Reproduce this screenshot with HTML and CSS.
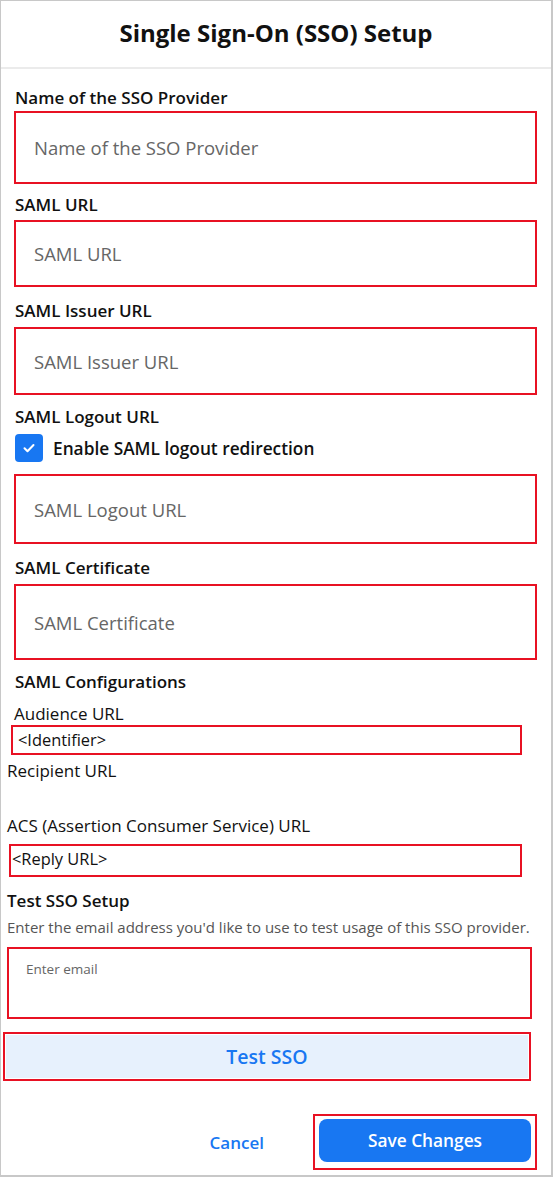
FILE: index.html
```html
<!DOCTYPE html>
<html lang="en">
<head>
  <meta charset="UTF-8" />
  <meta name="viewport" content="width=device-width, initial-scale=1.0" />
  <title>Single Sign-On (SSO) Setup</title>
  <link rel="stylesheet" href="styles.css">
</head>
<body>
  <div class="panel">
    <div class="panel-header">
      <h1>Single Sign-On (SSO) Setup</h1>
    </div>

    <div class="panel-body">
      <label class="field-label first">Name of the SSO Provider</label>
      <div class="mark box-name"><input type="text" placeholder="Name of the SSO Provider" /></div>

      <label class="field-label gap-10">SAML URL</label>
      <div class="mark box-url"><input type="text" placeholder="SAML URL" /></div>

      <label class="field-label gap-13">SAML Issuer URL</label>
      <div class="mark box-issuer"><input type="text" placeholder="SAML Issuer URL" /></div>

      <label class="field-label gap-11">SAML Logout URL</label>
      <div class="check-row">
        <span class="checkbox">
          <svg width="16" height="16" viewBox="0 0 16 16"><path d="M3.5 8.3l3 3 6-6.3" fill="none" stroke="#fff" stroke-width="2" stroke-linecap="round" stroke-linejoin="round"/></svg>
        </span>
        <span class="check-text">Enable SAML logout redirection</span>
      </div>
      <div class="mark box-logout"><input type="text" placeholder="SAML Logout URL" /></div>

      <label class="field-label gap-13">SAML Certificate</label>
      <div class="mark box-cert"><input type="text" placeholder="SAML Certificate" /></div>

      <label class="field-label gap-11">SAML Configurations</label>
      <div class="plain-label audience">Audience URL</div>
      <div class="mark small box-identifier">&lt;Identifier&gt;</div>
      <div class="plain-label recipient">Recipient URL</div>
      <div class="plain-label acs">ACS (Assertion Consumer Service) URL</div>
      <div class="mark small box-reply">&lt;Reply URL&gt;</div>

      <label class="field-label test-title">Test SSO Setup</label>
      <p class="hint">Enter the email address you'd like to use to test usage of this SSO provider.</p>
      <div class="mark box-email"><textarea placeholder="Enter email"></textarea></div>

      <div class="mark box-test"><button class="btn-test">Test SSO</button></div>

      <div class="footer">
        <button class="btn-cancel">Cancel</button>
        <div class="mark box-save"><button class="btn-save">Save Changes</button></div>
      </div>
    </div>
  </div>
</body>
</html>
```

FILE: styles.css
```css
* {
  box-sizing: border-box;
}
body {
  margin: 0;
  font-family: "Open Sans", "Noto Sans", Arial, sans-serif;
  background: #fff;
  color: #111;
}
.panel {
  width: 553px;
  height: 1177px;
  border: 1px solid #c8c8c8;
  border-right: 2px solid #c8c8c8;
  border-bottom: 2px solid #c8c8c8;
}
.panel-header {
  height: 68px;
  border-bottom: 2px solid #ebebeb;
  display: flex;
  align-items: center;
  justify-content: center;
  padding-bottom: 2px;
}
h1 {
  margin: 0;
  font-size: 24px;
  font-weight: 700;
  line-height: 30px;
}
.panel-body {
  display: flex;
  flex-direction: column;
}
.field-label {
  display: block;
  margin: 10px 0 0 14px;
  font-size: 17px;
  font-weight: 600;
  line-height: 22px;
}
.field-label.first {
  margin-top: 18px;
}
.gap-10 { margin-top: 10px; }
.gap-11 { margin-top: 11px; }
.gap-13 { margin-top: 13px; }
.mark {
  border: 2px solid #e81123;
}
.mark input {
  width: 100%;
  height: 100%;
  border: none;
  outline: none;
  padding: 0 0 0 18px;
  font-family: inherit;
  font-size: 18.5px;
  color: #111;
  background: transparent;
}
.mark input::placeholder,
.mark textarea::placeholder {
  color: #666;
}
.box-name {
  margin: 2px 14px 0 13px;
  height: 73px;
}
.box-url {
  margin: 4px 14px 0 13px;
  height: 67px;
}
.box-issuer {
  margin: 5px 14px 0 13px;
  height: 68px;
}
.check-row {
  display: flex;
  align-items: center;
  gap: 10px;
  height: 28px;
  margin: 6px 0 0 14px;
}
.checkbox {
  width: 28px;
  height: 28px;
  border-radius: 4px;
  background: #1877f2;
  display: flex;
  align-items: center;
  justify-content: center;
}
.check-text {
  font-size: 17.3px;
  font-weight: 600;
}
.box-logout {
  margin: 12px 14px 0 13px;
  height: 70px;
}
.box-cert {
  margin: 5px 14px 0 13px;
  height: 76px;
}
.plain-label {
  font-size: 17px;
  line-height: 22px;
}
.audience {
  margin: 10px 0 0 13px;
}
.mark.small {
  font-size: 16.4px;
  line-height: 26px;
}
.box-identifier {
  margin: 0 29px 0 10px;
  height: 30px;
  padding-left: 5px;
}
.recipient {
  margin: 5px 0 0 6px;
}
.acs {
  margin: 33px 0 0 6px;
}
.box-reply {
  margin: 7px 29px 0 8px;
  height: 33px;
  padding-left: 1px;
}
.test-title {
  margin: 13px 0 0 6px;
}
.hint {
  margin: 5px 0 0 6px;
  font-size: 15px;
  line-height: 20px;
  color: #555;
}
.box-email {
  margin: 10px 19px 0 6px;
  height: 72px;
}
.box-email textarea {
  width: 100%;
  height: 100%;
  border: none;
  outline: none;
  resize: none;
  padding: 11px 17px;
  font-family: inherit;
  font-size: 13.5px;
  background: transparent;
}
.box-test {
  margin: 13px 20px 0 2px;
  height: 49px;
  padding: 1px;
}
.btn-test {
  width: 100%;
  height: 100%;
  border: none;
  background: #e7f1fd;
  color: #1877f2;
  font-family: inherit;
  font-size: 19.5px;
  font-weight: 600;
}
.footer {
  display: flex;
  align-items: center;
  justify-content: flex-end;
  margin: 33px 14px 0 0;
}
.btn-cancel {
  border: none;
  background: none;
  padding: 0;
  color: #1877f2;
  font-family: inherit;
  font-size: 17px;
  font-weight: 600;
  margin-right: 49px;
}
.box-save {
  width: 224px;
  height: 56px;
  padding: 3px 4px 6px 4px;
}
.btn-save {
  width: 100%;
  height: 100%;
  border: none;
  border-radius: 8px;
  background: #1877f2;
  color: #fff;
  font-family: inherit;
  font-size: 17.3px;
  font-weight: 600;
}
```
